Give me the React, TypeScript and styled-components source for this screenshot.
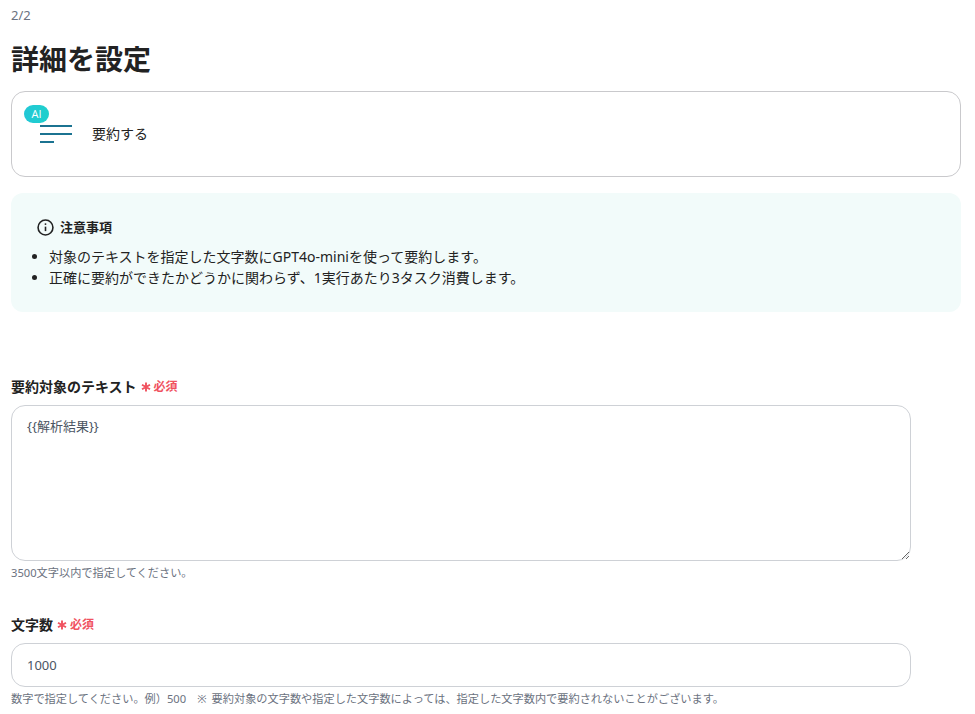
import React from "react";
import styled, { createGlobalStyle } from "styled-components";

const GlobalStyle = createGlobalStyle`
    html, body {
        margin: 0;
        padding: 0;
        background: #fff;
        overflow: hidden;
    }
    body {
        font-family: "Noto Sans", "Noto Sans CJK JP", sans-serif;
        color: #222;
    }
`;

const Page = styled.main`
    width: 950px;
    padding: 6px 14px 0 11px;
`;

const Step = styled.div`
    font-size: 13px;
    line-height: 18px;
    color: #6b7280;
`;

const Title = styled.h1`
    margin: 16px 0 13px;
    font-size: 28px;
    line-height: 38px;
    font-weight: 700;
    color: #222;
`;

const ActionCard = styled.div`
    height: 86px;
    box-sizing: border-box;
    border: 1px solid #c9c9cc;
    border-radius: 14px;
    padding: 12px 12px;
    display: flex;
    align-items: flex-start;
`;

const IconWrap = styled.div`
    position: relative;
    width: 48px;
    height: 42px;
    flex-shrink: 0;
`;

const AiBadge = styled.span`
    position: absolute;
    left: 0;
    top: 1px;
    width: 25px;
    height: 18px;
    border-radius: 9px;
    background: linear-gradient(90deg, #22c7d6, #1fd0cc);
    color: #fff;
    font: 11px/18px "Open Sans", sans-serif;
    text-align: center;
`;

const ActionName = styled.span`
    margin: 19px 0 0 20px;
    font-size: 14px;
    line-height: 22px;
    color: #222;
`;

const Notice = styled.section`
    margin-top: 16px;
    height: 119px;
    box-sizing: border-box;
    background: #f2fbfa;
    border-radius: 12px;
    padding: 24px 26px 0 26px;
`;

const NoticeHead = styled.div`
    display: flex;
    align-items: center;
    gap: 6px;
    font-size: 13px;
    line-height: 20px;
    font-weight: 700;
    color: #222;
`;

const NoticeList = styled.ul`
    margin: 9px 0 0;
    padding: 0 0 0 12px;
    font-size: 14px;
    line-height: 21px;
    color: #222;
`;

const Field = styled.div<{ $top: number }>`
    width: 900px;
    margin-top: ${(p) => p.$top}px;
`;

const Label = styled.label`
    display: flex;
    align-items: center;
    font-size: 14px;
    line-height: 20px;
    font-weight: 700;
    color: #222;
    margin-bottom: 8px;
`;

const Required = styled.span`
    margin-left: 4px;
    font-size: 12px;
    font-weight: 700;
    color: #f0525f;
    display: inline-flex;
    align-items: center;
    gap: 3px;
`;

const TextArea = styled.textarea`
    display: block;
    width: 100%;
    height: 156px;
    box-sizing: border-box;
    border: 1px solid #ced1d6;
    border-radius: 14px;
    padding: 11px 15px;
    font: 13px/18px "Noto Sans", "Noto Sans CJK JP", sans-serif;
    color: #4b5563;
    outline: none;
    resize: vertical;
`;

const TextInput = styled.input`
    display: block;
    width: 100%;
    height: 44px;
    box-sizing: border-box;
    border: 1px solid #ced1d6;
    border-radius: 14px;
    padding: 0 15px;
    font: 13px "Noto Sans", "Noto Sans CJK JP", sans-serif;
    color: #4b5563;
    outline: none;
`;

const Hint = styled.p`
    margin: 4px 0 0;
    font-size: 11.2px;
    line-height: 16px;
    color: #6b7280;
    white-space: pre;
    word-spacing: 2px;
`;

function SummaryIcon() {
    return (
        <svg
            width='32'
            height='20'
            viewBox='0 0 32 20'
            style={{ position: "absolute", left: 16, top: 21 }}>
            <path
                d='M0 1h32M0 9h32M0 17h14'
                stroke='#1b7391'
                strokeWidth='1.8'
                fill='none'
            />
        </svg>
    );
}

function InfoIcon() {
    return (
        <svg width='17' height='17' viewBox='0 0 16 16' fill='none'>
            <circle cx='8' cy='8' r='7' stroke='#222' strokeWidth='1.5' />
            <path d='M8 7.2v4.2' stroke='#222' strokeWidth='1.5' />
            <circle cx='8' cy='4.8' r='0.9' fill='#222' />
        </svg>
    );
}

function Mark() {
    return (
        <Required>
            <svg width='10' height='10' viewBox='0 0 10 10'>
                <path
                    d='M5 .5v9M1 2.7l8 4.6M9 2.7L1 7.3'
                    stroke='#f0525f'
                    strokeWidth='1.9'
                />
            </svg>
            必須
        </Required>
    );
}

export default function App() {
    return (
        <Page>
            <GlobalStyle />
            <Step>2/2</Step>
            <Title>詳細を設定</Title>
            <ActionCard>
                <IconWrap>
                    <AiBadge>AI</AiBadge>
                    <SummaryIcon />
                </IconWrap>
                <ActionName>要約する</ActionName>
            </ActionCard>
            <Notice>
                <NoticeHead>
                    <InfoIcon />
                    注意事項
                </NoticeHead>
                <NoticeList>
                    <li>対象のテキストを指定した文字数にGPT4o-miniを使って要約します。</li>
                    <li>正確に要約ができたかどうかに関わらず、1実行あたり3タスク消費します。</li>
                </NoticeList>
            </Notice>
            <Field $top={65}>
                <Label>
                    要約対象のテキスト
                    <Mark />
                </Label>
                <TextArea defaultValue='{{解析結果}}' />
                <Hint>3500文字以内で指定してください。</Hint>
            </Field>
            <Field $top={34}>
                <Label>
                    文字数
                    <Mark />
                </Label>
                <TextInput defaultValue='1000' />
                <Hint>数字で指定してください。例）500　※ 要約対象の文字数や指定した文字数によっては、指定した文字数内で要約されないことがございます。</Hint>
            </Field>
        </Page>
    );
}
